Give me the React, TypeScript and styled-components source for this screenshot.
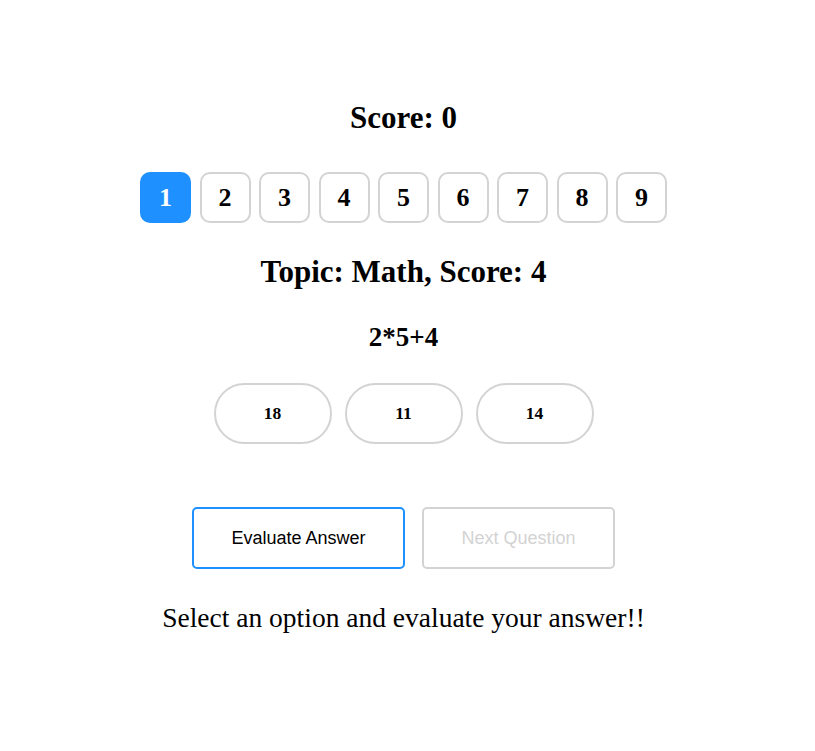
import React, { useState } from "react";
import styled, { createGlobalStyle } from "styled-components";

const GlobalStyle = createGlobalStyle`
  body {
    margin: 0;
    background: #ffffff;
    font-family: "Liberation Serif", "Times New Roman", serif;
    color: #000000;
  }
`;

const Page = styled.main`
  width: 807px;
  display: flex;
  flex-direction: column;
  align-items: center;
  padding-top: 100px;
`;

const Heading = styled.h2<{ $size: number; $gap: number }>`
  margin: ${(p) => p.$gap}px 0 0;
  font-size: ${(p) => p.$size}px;
  line-height: ${(p) => p.$size + 5}px;
  font-weight: 700;
`;

const QuestionTabs = styled.div`
  display: flex;
  gap: 8.5px;
  margin-top: 36px;
`;

const Tab = styled.button<{ $active?: boolean }>`
  width: 51px;
  height: 51px;
  padding: 0;
  display: flex;
  align-items: center;
  justify-content: center;
  box-sizing: border-box;
  border: 2px solid ${(p) => (p.$active ? "#1e90ff" : "#d3d3d3")};
  border-radius: 10px;
  background: ${(p) => (p.$active ? "#1e90ff" : "#ffffff")};
  color: ${(p) => (p.$active ? "#ffffff" : "#000000")};
  font-family: "Liberation Serif", "Times New Roman", serif;
  font-size: 26px;
  font-weight: 700;
  cursor: pointer;
`;

const Options = styled.div`
  display: flex;
  gap: 13px;
  margin-top: 30.5px;
`;

const Option = styled.button<{ $selected?: boolean }>`
  width: 118px;
  height: 61px;
  box-sizing: border-box;
  border: 2px solid ${(p) => (p.$selected ? "#1e90ff" : "#d3d3d3")};
  border-radius: 31px;
  background: #ffffff;
  font-family: "Liberation Serif", "Times New Roman", serif;
  font-size: 17.5px;
  font-weight: 700;
  color: #000000;
  cursor: pointer;
`;

const Actions = styled.div`
  display: flex;
  gap: 17px;
  margin-top: 63px;
`;

const ActionButton = styled.button`
  height: 62px;
  padding: 0 37.5px;
  box-sizing: border-box;
  border: 2px solid #1e90ff;
  border-radius: 5px;
  background: #ffffff;
  font-family: "Liberation Sans", Arial, sans-serif;
  font-size: 18px;
  color: #000000;
  cursor: pointer;

  &:disabled {
    border-color: #d3d3d3;
    color: #d3d3d3;
    cursor: default;
  }
`;

const Message = styled.p`
  margin: 32.5px 0 0;
  font-size: 27.5px;
  line-height: 32px;
`;

const tabs = [1, 2, 3, 4, 5, 6, 7, 8, 9];
const answers = ["18", "11", "14"];

export default function App() {
  const [current, setCurrent] = useState(1);
  const [picked, setPicked] = useState<string | null>(null);

  return (
    <>
      <GlobalStyle />
      <Page>
        <Heading $size={31} $gap={0}>
          Score: 0
        </Heading>
        <QuestionTabs>
          {tabs.map((n) => (
            <Tab key={n} $active={n === current} onClick={() => setCurrent(n)}>
              {n}
            </Tab>
          ))}
        </QuestionTabs>
        <Heading $size={31} $gap={30.5}>
          Topic: Math, Score: 4
        </Heading>
        <Heading $size={27} $gap={31}>
          2*5+4
        </Heading>
        <Options>
          {answers.map((a) => (
            <Option key={a} $selected={picked === a} onClick={() => setPicked(a)}>
              {a}
            </Option>
          ))}
        </Options>
        <Actions>
          <ActionButton>Evaluate Answer</ActionButton>
          <ActionButton disabled>Next Question</ActionButton>
        </Actions>
        <Message>Select an option and evaluate your answer!!</Message>
      </Page>
    </>
  );
}
